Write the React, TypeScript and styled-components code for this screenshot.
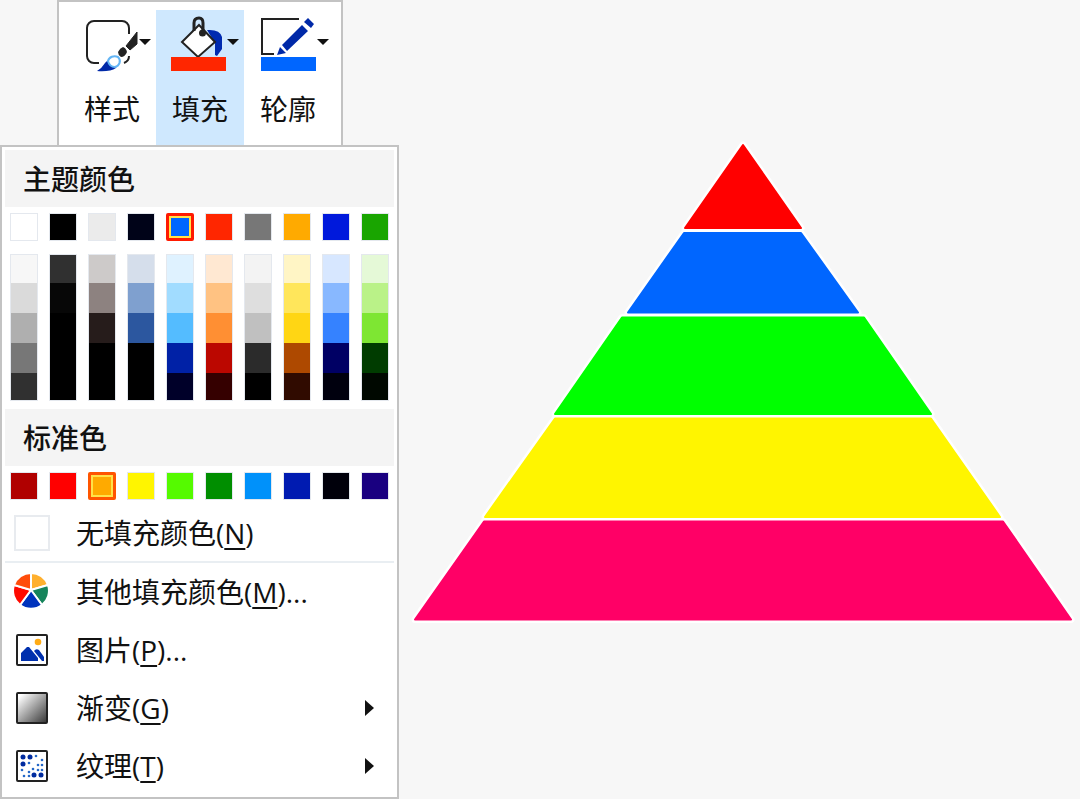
import React from "react";
import styled, { createGlobalStyle } from "styled-components";

const GlobalStyle = createGlobalStyle`
  *, *::before, *::after { box-sizing: border-box; }
  body {
    margin: 0;
    background: #f7f7f7;
    color: #111;
    font-family: "Open Sans", "Noto Sans CJK SC", sans-serif;
    font-size: 28px;
    line-height: 36px;
  }
  button { font: inherit; color: inherit; padding: 0; border: 0; background: none; cursor: pointer; }
`;

const Page = styled.div`
  display: grid;
  grid-template-columns: 399px minmax(0, 1fr);
  align-items: start;
`;

const Toolbar = styled.div`
  display: grid;
  grid-template-columns: repeat(3, 1fr);
  margin: 0 56px 0 57px;
  padding: 8px 9px 0;
  border: 2px solid #c3c3c3;
  border-bottom: 0;
  background: #fff;
`;

const ToolButton = styled.button<{ $active?: boolean }>`
  display: flex;
  flex-direction: column;
  align-items: center;
  gap: 18px;
  height: 135px;
  background: ${(p) => (p.$active ? "#cfe8fe" : "transparent")};
`;

const ToolIcon = styled.svg`
  display: block;
  width: 88px;
  height: 63px;
`;

const Menu = styled.div`
  display: flex;
  flex-direction: column;
  padding: 3px 3px 2px;
  border: 2px solid #c3c3c3;
  background: #fff;
`;

const Heading = styled.h2`
  margin: 0;
  padding: 11px 18px 10px;
  background: #f4f4f4;
  font-size: 28px;
  line-height: 36px;
  font-weight: 500;
`;

const SwatchRow = styled.div`
  display: grid;
  grid-template-columns: repeat(10, 28px);
  justify-content: space-between;
  padding: 6px 5px;
`;

const Swatch = styled.button<{ $color: string; $ring?: string }>`
  height: 28px;
  border: 1px solid #e4e8ee;
  background: ${(p) => p.$color};
  ${(p) =>
    p.$ring &&
    `border: 3px solid ${p.$ring}; box-shadow: inset 0 0 0 2px #ffe24a; border-radius: 2px;`}
`;

const TintGrid = styled(SwatchRow)`
  padding: 7px 5px 8px;
`;

const TintColumn = styled.div`
  display: grid;
  grid-template-rows: 28px 30px 30px 30px 27px;
  border: 1px solid #e4e8ee;
`;

const Tint = styled.button<{ $color: string }>`
  background: ${(p) => p.$color};
`;

const MenuItem = styled.button<{ $short?: boolean }>`
  display: grid;
  grid-template-columns: 36px 1fr 12px;
  align-items: center;
  column-gap: 26px;
  height: ${(p) => (p.$short ? "55px" : "58px")};
  padding: ${(p) => (p.$short ? "0 18px 2px 9px" : "0 18px 0 9px")};
  text-align: left;
  white-space: nowrap;
`;

const EmptySwatch = styled.span`
  width: 36px;
  height: 36px;
  border: 2px solid #e8ebef;
  background: #fff;
`;

const ItemIcon = styled.svg`
  display: block;
  width: 36px;
  height: 36px;
`;

const Arrow = styled.svg`
  display: block;
  width: 12px;
  height: 18px;
`;

const Separator = styled.hr`
  width: 100%;
  margin: 0;
  border: 0;
  border-top: 2px solid #e9eef2;
`;

const ItemText = styled.span`
  u { text-decoration-thickness: 2px; text-underline-offset: 4px; }
`;

const Canvas = styled.main`
  padding: 142px 7px 0 14px;
`;

const Pyramid = styled.svg`
  display: block;
  width: 100%;
  height: auto;
  overflow: visible;
`;

const themeColors = ["#ffffff", "#000000", "#ebebeb", "#000318", "#0066ff", "#ff2600", "#777777", "#ffaa00", "#0019dc", "#19a500"];

const tints = [
  ["#f7f7f7", "#dadada", "#afafaf", "#777777", "#303030"],
  ["#303030", "#070707", "#000000", "#000000", "#000000"],
  ["#cdcac9", "#8d8280", "#261c1b", "#000000", "#000000"],
  ["#d5deeb", "#7fa0cf", "#2c579f", "#000000", "#000000"],
  ["#dff2ff", "#a1dcff", "#54bcff", "#0021a6", "#000029"],
  ["#ffe8d2", "#ffc282", "#ff8f33", "#bb0700", "#350000"],
  ["#f3f3f3", "#dedede", "#c0c0c0", "#2b2b2b", "#000000"],
  ["#fff5c5", "#ffe65b", "#ffd614", "#ae4900", "#300b00"],
  ["#d7e7ff", "#88b8ff", "#3582ff", "#000064", "#00000e"],
  ["#e5f9d7", "#baf288", "#7ee633", "#003c00", "#000800"],
];

const standardColors = ["#b00000", "#ff0000", "#ffaa00", "#fff500", "#55fa00", "#008e00", "#0091fa", "#001bb1", "#00000b", "#190080"];

const layers = [
  { fill: "#ff0000", points: "330,3 388,86 272,86" },
  { fill: "#0066ff", points: "271,91 388,91 445,170.5 215,170.5" },
  { fill: "#00ff00", points: "209,175.5 451,175.5 518,272 142,272" },
  { fill: "#fff500", points: "142,276.5 518,276.5 587,375 72,375" },
  { fill: "#ff0066", points: "71,379.5 590,379.5 658,477.5 2,477.5" },
];

const DropMark = () => <path d="M71 29h12l-6 6z" fill="#111" />;

const StyleIcon = () => (
  <ToolIcon viewBox="0 0 88 63">
    <path
      d="M31 53h-5a7 7 0 0 1-7-7V18a7 7 0 0 1 7-7h28a7 7 0 0 1 7 7v6M61 46q0 5-5 7"
      fill="none"
      stroke="#222"
      strokeWidth="2"
    />
    <path d="M69 22v12l-7 6-4-4z" fill="#222" stroke="#222" strokeWidth="1" strokeLinejoin="round" />
    <path d="M55 37q3 1 4 5-2 5-6 5-3-2-3-5 2-4 5-5z" fill="#222" />
    <path d="M29 61q5-3 8-8 4-5 9-3 5 4 2 8-6 4-19 3z" fill="#0029a8" />
    <path d="M40 51c1-4 6-6 10-4 4 4 1 9-3 10-3 0-6-2-7-6z" fill="#fff" stroke="#63b5f5" strokeWidth="2" />
    <DropMark />
  </ToolIcon>
);

const FillIcon = () => (
  <ToolIcon viewBox="0 0 88 63">
    <path d="M51 20q13-1 15 7v12l-5 7-2-1V33z" fill="#002ab0" />
    <path d="M43 15L59 32 42 47 26 32z" fill="#fff" stroke="#222" strokeWidth="2" />
    <path d="M38 21v-8q0-5 5-5 4 0 4 5v10" fill="none" stroke="#222" strokeWidth="3" />
    <circle cx="46.500" cy="23" r="3.500" fill="#222" />
    <path d="M15 47h55v14H15z" fill="#ff2600" />
    <DropMark />
  </ToolIcon>
);

const OutlineIcon = () => (
  <ToolIcon viewBox="0 0 88 63">
    <path d="M55 9H18v35h12" fill="none" stroke="#222" strokeWidth="2" />
    <path d="M38 35l20-20 6 6-21 20zM36 37l6 6-9 2zM60 12l4-4 6 6-3 4z" fill="#0029a8" />
    <path d="M17 47h55v14H17z" fill="#0066ff" />
    <path d="M73 29h12l-6 6z" fill="#111" />
  </ToolIcon>
);

const WheelIcon = () => (
  <ItemIcon viewBox="0 0 36 36">
    <g stroke="#fff" strokeWidth="2">
      <path d="M17 16V-1A18 18 0 0 1 34 11z" fill="#ffb02e" />
      <path d="M17 16l17-5a18 18 0 0 1-6 20z" fill="#16845b" />
      <path d="M17 16l11 15a18 18 0 0 1-22 0z" fill="#0033bd" />
      <path d="M17 16L6 31A18 18 0 0 1 0 11z" fill="#ff0a00" />
      <path d="M17 16L0 11A18 18 0 0 1 17-1z" fill="#ff4d0b" />
    </g>
  </ItemIcon>
);

const PictureIcon = () => (
  <ItemIcon viewBox="0 0 36 36">
    <rect x="3" y="3" width="30" height="30" rx="1" fill="#fff" stroke="#222" strokeWidth="2" />
    <circle cx="24" cy="10" r="3.300" fill="#ffab16" />
    <path d="M7 29v-8l6-6h2l9 11v3zM20 19q2-3 5-1l5 7v4h-2z" fill="#0030ae" />
  </ItemIcon>
);

const GradientIcon = () => (
  <ItemIcon viewBox="0 0 36 36">
    <defs>
      <linearGradient id="shade" x1="0" y1="0" x2="1" y2="1">
        <stop offset="0.1" stopColor="#fff" />
        <stop offset="1" stopColor="#333" />
      </linearGradient>
    </defs>
    <rect x="3" y="3" width="30" height="30" rx="1" fill="url(#shade)" stroke="#222" strokeWidth="2" />
  </ItemIcon>
);

const textureDots = [
  [9, 9, 2], [16, 9, 2], [22, 8, 1], [9, 16, 2], [15, 15, 1], [28, 12, 1],
  [24, 17, 1], [28, 17, 1], [8, 22, 1], [19, 21, 1], [24, 22, 1], [28, 22, 1],
  [15, 24, 1], [10, 28, 1], [15, 28, 1], [20, 27, 2], [27, 27, 2],
];

const TextureIcon = () => (
  <ItemIcon viewBox="0 0 36 36">
    <rect x="3" y="3" width="30" height="30" rx="1" fill="#fff" stroke="#222" strokeWidth="2" />
    {textureDots.map(([x, y, r]) => (
      <circle key={`${x}-${y}`} cx={x} cy={y} r={r === 2 ? 2.5 : 1.3} fill={r === 2 ? "#002b9f" : "#2468c8"} />
    ))}
  </ItemIcon>
);

const SubmenuArrow = () => (
  <Arrow viewBox="0 0 12 18">
    <path d="M1 1l9 8-9 8z" fill="#111" />
  </Arrow>
);

export default function App() {
  return (
    <>
      <GlobalStyle />
      <Page>
        <aside>
          <Toolbar role="toolbar">
            <ToolButton><StyleIcon />样式</ToolButton>
            <ToolButton $active><FillIcon />填充</ToolButton>
            <ToolButton><OutlineIcon />轮廓</ToolButton>
          </Toolbar>
          <Menu>
            <Heading>主题颜色</Heading>
            <SwatchRow>
              {themeColors.map((c, i) => (
                <Swatch key={c} aria-label={c} $color={c} $ring={i === 4 ? "#ff1a00" : undefined} />
              ))}
            </SwatchRow>
            <TintGrid>
              {tints.map((column, i) => (
                <TintColumn key={i}>
                  {column.map((c, j) => <Tint key={j} aria-label={c} $color={c} />)}
                </TintColumn>
              ))}
            </TintGrid>
            <Heading>标准色</Heading>
            <SwatchRow>
              {standardColors.map((c, i) => (
                <Swatch key={c} aria-label={c} $color={c} $ring={i === 2 ? "#ff5500" : undefined} />
              ))}
            </SwatchRow>
            <MenuItem $short>
              <EmptySwatch />
              <ItemText>无填充颜色(<u>N</u>)</ItemText>
            </MenuItem>
            <Separator />
            <MenuItem>
              <WheelIcon />
              <ItemText>其他填充颜色(<u>M</u>)...</ItemText>
            </MenuItem>
            <MenuItem>
              <PictureIcon />
              <ItemText>图片(<u>P</u>)...</ItemText>
            </MenuItem>
            <MenuItem>
              <GradientIcon />
              <ItemText>渐变(<u>G</u>)</ItemText>
              <SubmenuArrow />
            </MenuItem>
            <MenuItem>
              <TextureIcon />
              <ItemText>纹理(<u>T</u>)</ItemText>
              <SubmenuArrow />
            </MenuItem>
          </Menu>
        </aside>
        <Canvas>
          <Pyramid viewBox="0 0 660 479" role="img">
            {layers.map((l) => (
              <polygon key={l.fill} points={l.points} fill="#fff" stroke="#fff" strokeWidth="7" strokeLinejoin="round" />
            ))}
            {layers.map((l) => (
              <polygon key={l.fill} points={l.points} fill={l.fill} stroke={l.fill} strokeWidth="2" strokeLinejoin="round" />
            ))}
          </Pyramid>
        </Canvas>
      </Page>
    </>
  );
}
